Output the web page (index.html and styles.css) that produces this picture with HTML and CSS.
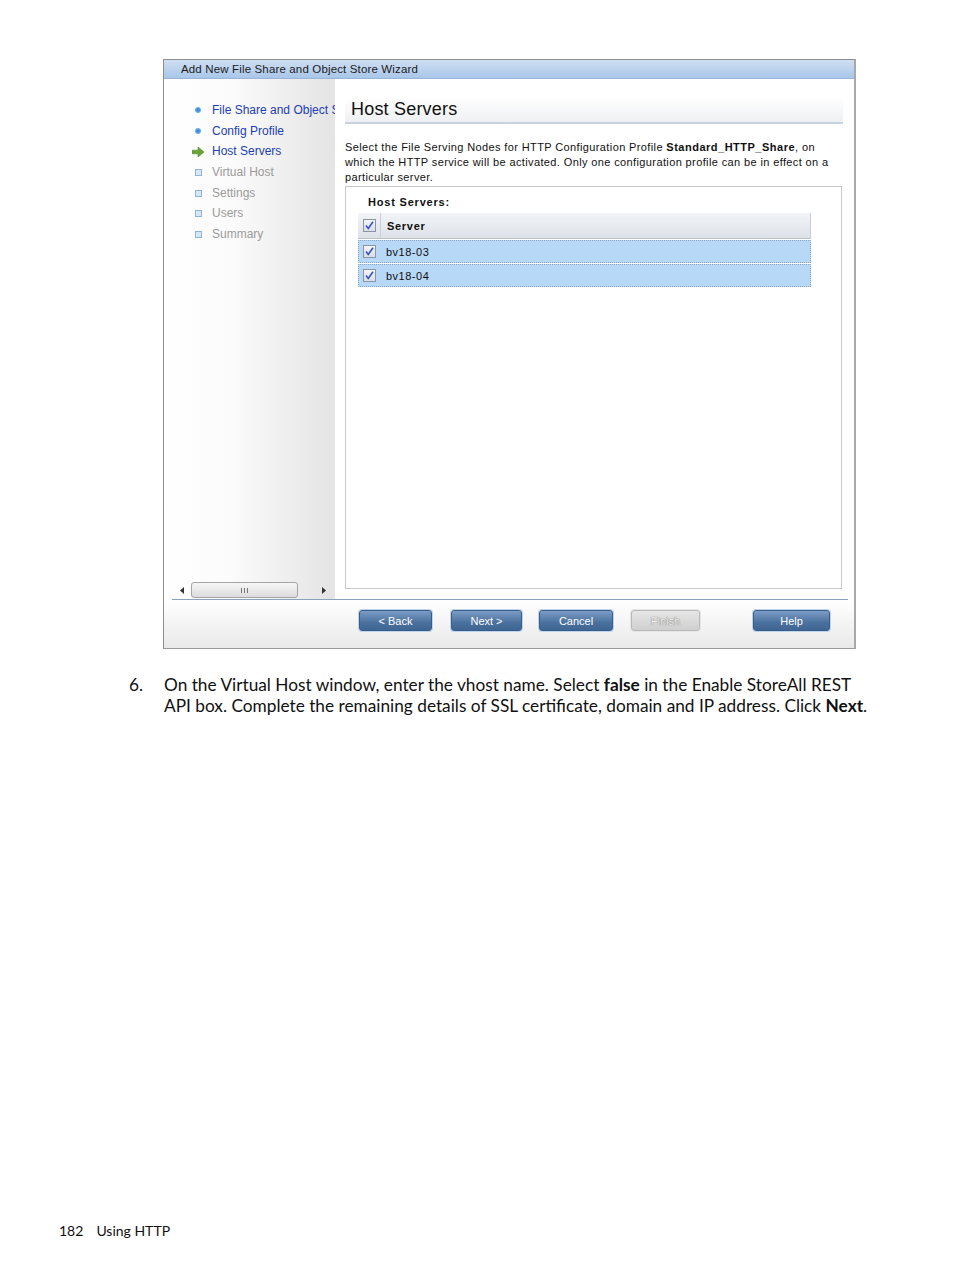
FILE: index.html
```html
<!DOCTYPE html>
<html>
<head>
<meta charset="utf-8">
<link rel="stylesheet" href="styles.css">
</head>
<body>
<div class="page">
  <div class="wizard">
    <div class="titlebar">Add New File Share and Object Store Wizard</div>
    <div class="main">
      <div class="nav">
        <ul class="steps">
          <li class="done"><span class="ico dot"></span>File Share and Object Store</li>
          <li class="done"><span class="ico dot"></span>Config Profile</li>
          <li class="current"><span class="ico arrow"><svg width="12" height="10" viewBox="0 0 12 10"><path d="M0 3.2h6V0l6 5-6 5V6.8H0z" fill="#6aa336" stroke="#4f8a24" stroke-width="0.6"/></svg></span>Host Servers</li>
          <li class="todo"><span class="ico sq"></span>Virtual Host</li>
          <li class="todo"><span class="ico sq"></span>Settings</li>
          <li class="todo"><span class="ico sq"></span>Users</li>
          <li class="todo"><span class="ico sq"></span>Summary</li>
        </ul>
        <div class="hscroll">
          <span class="arr"><svg width="4" height="7" viewBox="0 0 4 7"><path d="M4 0v7L0 3.5z" fill="#333"/></svg></span>
          <span class="thumb"><span class="grip"></span></span>
          <span class="arr right"><svg width="4" height="7" viewBox="0 0 4 7"><path d="M0 0v7l4-3.5z" fill="#333"/></svg></span>
        </div>
      </div>
      <div class="content">
        <div class="heading">Host Servers</div>
        <p class="desc">Select the File Serving Nodes for HTTP Configuration Profile <b>Standard_HTTP_Share</b>, on which the HTTP service will be activated. Only one configuration profile can be in effect on a particular server.</p>
        <div class="box">
          <div class="boxlabel">Host Servers:</div>
          <div class="table">
            <div class="thead">
              <span class="cbcell"><span class="cb"><svg width="9" height="9" viewBox="0 0 9 9"><path d="M1 4.5l2.3 3L8 0.8" fill="none" stroke="#3553c4" stroke-width="1.6"/></svg></span></span>
              <span class="th">Server</span>
            </div>
            <div class="row">
              <span class="cbcell"><span class="cb"><svg width="9" height="9" viewBox="0 0 9 9"><path d="M1 4.5l2.3 3L8 0.8" fill="none" stroke="#3553c4" stroke-width="1.6"/></svg></span></span>
              <span class="td">bv18-03</span>
            </div>
            <div class="row">
              <span class="cbcell"><span class="cb"><svg width="9" height="9" viewBox="0 0 9 9"><path d="M1 4.5l2.3 3L8 0.8" fill="none" stroke="#3553c4" stroke-width="1.6"/></svg></span></span>
              <span class="td">bv18-04</span>
            </div>
          </div>
        </div>
      </div>
    </div>
    <div class="sep"></div>
    <div class="footer">
      <button class="btn back">&lt; Back</button>
      <button class="btn next">Next &gt;</button>
      <button class="btn cancel">Cancel</button>
      <button class="btn finish" disabled>Finish</button>
      <button class="btn help">Help</button>
    </div>
  </div>

  <div class="stepdoc">
    <span class="stepnum">6.</span>
    <p class="steptext">On the Virtual Host window, enter the vhost name. Select <b>false</b> in the Enable StoreAll REST API box. Complete the remaining details of SSL certificate, domain and IP address. Click <b>Next</b>.</p>
  </div>

  <div class="pagefoot"><span class="pnum">182</span><span>Using HTTP</span></div>
</div>
</body>
</html>
```

FILE: styles.css
```css
html, body {
  margin: 0;
  padding: 0;
  background: #fff;
}
.page {
  width: 954px;
  height: 1271px;
  box-sizing: border-box;
  padding-top: 59px;
  display: flex;
  flex-direction: column;
  font-family: "Liberation Sans", Arial, sans-serif;
}
.wizard {
  margin-left: 163px;
  width: 690px;
  height: 588px;
  border: 1px solid #8e8e8e;
  border-right: 2px solid #a8a8a8;
  border-bottom: 1px solid #9a9a9a;
  display: flex;
  flex-direction: column;
  background: #fff;
  flex: none;
}
.titlebar {
  height: 18px;
  line-height: 19px;
  padding-left: 17px;
  font-size: 11.5px;
  letter-spacing: 0.15px;
  color: #1c1c1c;
  background: linear-gradient(#cfdff2, #a9c6ea);
  border-bottom: 1px solid #9ab5d8;
}
.main {
  display: flex;
  height: 520px;
}
.nav {
  width: 171px;
  flex: none;
  background: linear-gradient(90deg, #ffffff 0%, #fbfbfb 40%, #ebebeb 80%, #e4e4e4 100%);
  display: flex;
  flex-direction: column;
  overflow: hidden;
}
.steps {
  list-style: none;
  margin: 0;
  padding: 21px 0 0 28px;
  flex: 1;
  font-size: 12px;
}
.steps li {
  height: 20.7px;
  line-height: 20.7px;
  white-space: nowrap;
  display: flex;
  align-items: center;
}
.ico {
  width: 12px;
  height: 10px;
  margin-right: 8px;
  flex: none;
  display: flex;
  align-items: center;
  justify-content: center;
}
.dot::before {
  content: "";
  width: 6px;
  height: 6px;
  border-radius: 50%;
  background: radial-gradient(circle at 50% 50%, #2f7bd0 0, #5aa3e6 50%, #a6cff3 100%);
}
.sq::before {
  content: "";
  width: 5px;
  height: 5px;
  border: 1px solid #8fb3d9;
  background: #d6e7f7;
}
.done, .current { color: #2240b0; }
.todo { color: #9a9a9a; }
.hscroll {
  height: 16px;
  margin: 0 5px 1px 8px;
  display: flex;
  align-items: center;
}
.arr {
  width: 19px;
  display: flex;
  justify-content: center;
}
.arr.right { margin-left: auto; width: 12px; }
.thumb {
  width: 105px;
  height: 14px;
  border: 1px solid #a5a5a5;
  border-radius: 3px;
  background: linear-gradient(#f6f6f6, #dcdcdc);
  display: flex;
  align-items: center;
  justify-content: center;
}
.grip {
  width: 7px;
  height: 5px;
  background: repeating-linear-gradient(90deg, #777 0 1px, transparent 1px 3px);
}
.content {
  flex: 1;
  padding: 19px 11px 10px 10px;
  display: flex;
  flex-direction: column;
}
.heading {
  height: 24px;
  line-height: 22px;
  padding-left: 6px;
  font-size: 18px;
  letter-spacing: 0.2px;
  color: #111;
  background: linear-gradient(#ffffff, #eef0f3);
  border-bottom: 2px solid #c9d3df;
}
.desc {
  margin: 16px 0 1px 0;
  font-size: 11px;
  letter-spacing: 0.38px;
  line-height: 15px;
  color: #111;
}
.desc b { font-weight: bold; letter-spacing: 0.5px; }
.box {
  flex: 1;
  margin-right: 1px;
  border: 1px solid #c8c8c8;
  padding: 8px 30px 0 12px;
}
.boxlabel {
  font-size: 11px;
  font-weight: bold;
  letter-spacing: 0.8px;
  color: #111;
  padding-left: 10px;
  height: 18px;
  line-height: 14px;
}
.table {
  font-size: 11px;
  letter-spacing: 0.5px;
}
.thead {
  display: flex;
  height: 25px;
  align-items: stretch;
  background: linear-gradient(#f2f4f7, #dde2e8);
  border-bottom: 1px solid #b9c1cc;
  border-right: 1px solid #c8ced6;
}
.cbcell {
  width: 22px;
  display: flex;
  align-items: center;
  justify-content: center;
  border-right: 1px solid #c9cfd8;
}
.cb {
  width: 11px;
  height: 11px;
  border: 1px solid #8995a5;
  background: linear-gradient(#f3f5f8, #d8dee6);
  display: flex;
  align-items: center;
  justify-content: center;
}
.th {
  font-weight: bold;
  letter-spacing: 0.7px;
  padding-left: 6px;
  display: flex;
  align-items: center;
  color: #111;
}
.row {
  display: flex;
  height: 21px;
  margin-top: 1px;
  background: #b8d8f8;
  border: 1px dotted #8aa4c2;
}
.row .cbcell { border-right: none; width: 21px; }
.td {
  padding-left: 6px;
  display: flex;
  align-items: center;
  color: #111;
}
.sep {
  height: 1px;
  margin: 0 6px 0 8px;
  background: #8ba2bf;
}
.footer {
  flex: 1;
  background: linear-gradient(#ffffff, #e9e9e9);
  display: flex;
  align-items: flex-start;
  padding: 10px 0 0 195px;
}
.btn {
  height: 21px;
  padding: 0;
  font-family: "Liberation Sans", Arial, sans-serif;
  font-size: 11px;
  color: #fff;
  border: 1px solid #3a5d87;
  border-radius: 3px;
  background: linear-gradient(#7b9cc6, #4b729f 60%, #3f6592);
  box-shadow: 0 0 0 1px #bcd4ee;
}
.back { width: 73px; }
.next { width: 71px; margin-left: 19px; }
.cancel { width: 74px; margin-left: 17px; }
.finish {
  width: 69px;
  margin-left: 18px;
  color: #f4f4f4;
  border-color: #b9b9b9;
  background: linear-gradient(#e6e6e6, #cfcfcf);
  box-shadow: 0 0 0 1px #e6e6e6;
  text-shadow: 0 0 1px #7a7a7a, 0 0 1px #7a7a7a;
}
.help { width: 77px; margin-left: 53px; }

.stepdoc {
  display: flex;
  margin: 25px 0 0 129px;
  font-family: "Lato", "Liberation Sans", sans-serif;
  font-size: 17.25px;
  line-height: 21px;
  color: #111;
}
.stepnum {
  width: 35px;
  flex: none;
}
.steptext {
  margin: 0;
  width: 711px;
}
.steptext b { font-weight: bold; }
.pagefoot {
  margin: auto 0 31px 59px;
  font-family: "Lato", "Liberation Sans", sans-serif;
  font-size: 14px;
  line-height: 18px;
  color: #111;
  display: flex;
  gap: 13px;
}
```
